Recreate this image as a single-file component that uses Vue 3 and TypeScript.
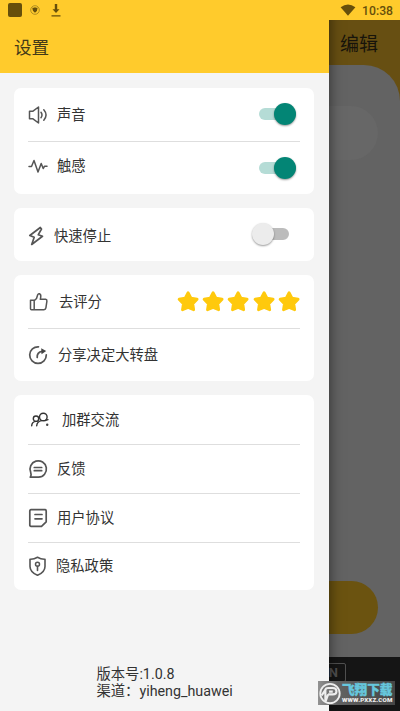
<script setup lang="ts">
import { ref } from 'vue'

const sound = ref(true)
const haptic = ref(true)
const quickStop = ref(false)
const stars = 5
</script>

<template>
  <div class="screen">
    <main class="page">
      <header class="page-head">编辑</header>
      <section class="sheet">
        <div class="result"></div>
        <div class="start"></div>
      </section>
      <footer class="ad"><span class="ad-box">N</span></footer>
    </main>

    <aside class="drawer">
      <header class="title">设置</header>
      <div class="content">
        <section class="card">
          <div class="row r-sound">
            <svg class="icon" viewBox="0 0 20 20"><path d="M1.500 6.200H5L10.500 2v16L5 13.800H1.500z" /><path d="M13 7.300q2 2.700 0 5.400M15.800 4.800q4.500 5.200 0 10.400" /></svg>
            <span class="label">声音</span>
            <button class="switch" :class="{ on: sound }" @click="sound = !sound"><i></i></button>
          </div>
          <div class="row r-haptic">
            <svg class="icon" viewBox="0 0 20 20"><path d="M1 10.500h2.500L6 4.500l4 11.500 3.200-8.500 2 5 1.400-2.300H19" /></svg>
            <span class="label">触感</span>
            <button class="switch" :class="{ on: haptic }" @click="haptic = !haptic"><i></i></button>
          </div>
        </section>

        <section class="card">
          <div class="row r-stop">
            <svg class="icon" viewBox="0 0 20 20"><path d="M12.300 1.500 1.800 9.500l4.400 1.800L3.700 18.500 14.500 10.300l-4.200-1.600L13.500 3z" stroke-width="1.700" /></svg>
            <span class="label">快速停止</span>
            <button class="switch" :class="{ on: quickStop }" @click="quickStop = !quickStop"><i></i></button>
          </div>
        </section>

        <section class="card">
          <div class="row r-rate">
            <svg class="icon" viewBox="0 0 20 20"><path d="M1.500 8.200h3.700v9.500H2.500q-1 0-1-1zM5.200 8.700 7.500 6.500l1.200-3.800Q9.300 1.300 10.500 1.800q1.700.8 1.200 3.500l-.4 2h5.300q1.500.2 1.300 1.800l-1 6.800q-.3 1.800-1.900 1.800H5.200" /></svg>
            <span class="label">去评分</span>
            <div class="stars">
              <svg v-for="n in stars" :key="n" viewBox="0 0 22 22"><path d="m11 2.200 2.900 5.500 6.100 1-4.300 4.600.9 6L11 16.900l-5.600 2.400.9-6L2 8.700l6.100-1z" /></svg>
            </div>
          </div>
          <div class="row r-share">
            <svg class="icon" viewBox="0 0 20 20"><path d="M10.500 1.800A8.300 8.300 0 1 0 18.300 9.800M9.200 12.500q-.4-5.400 5-6.200" stroke-width="1.700" /><path class="fill" d="m13.200 3.200 5 2.800-4.700 3.300z" /></svg>
            <span class="label">分享决定大转盘</span>
          </div>
        </section>

        <section class="card">
          <div class="row r-group">
            <svg class="icon dark" viewBox="0 0 20 20"><circle cx="6" cy="8.700" r="2.700" /><circle cx="13.300" cy="7" r="3.800" /><path d="M1.700 15.800q.2-4.100 4.300-4.400M6.700 15.800q.4-4.400 4.800-5.200M15 10.600l3-1" /><circle class="fill" cx="17.200" cy="14.800" r="1.200" /></svg>
            <span class="label">加群交流</span>
          </div>
          <div class="row r-feedback">
            <svg class="icon" viewBox="0 0 20 20"><path d="M2.300 18.200H10.500a8.200 8.200 0 1 0-7.800-4.900q1 2.400-.4 4.900zM6.300 8.500h7.400M6.300 11.700h7.400" stroke-width="1.700" /></svg>
            <span class="label">反馈</span>
          </div>
          <div class="row r-terms">
            <svg class="icon" viewBox="0 0 20 20"><path d="M3 1.700h14q1.200 0 1.200 1.300v10.800L13.500 18.300H3Q1.800 18.300 1.800 17V3Q1.800 1.700 3 1.700zM7 6.500h7M7 10.800h7" stroke-width="1.700" /></svg>
            <span class="label">用户协议</span>
          </div>
          <div class="row r-privacy">
            <svg class="icon" viewBox="0 0 20 20"><path d="M9.500 1.200q3.500 2.200 7.500 2v7.200q0 5.500-7.500 8.900Q2 15.900 2 10.400V3.200q4 .2 7.500-2zM9.500 10.200v4.300" stroke-width="1.600" /><circle cx="9.500" cy="8.200" r="2" /></svg>
            <span class="label">隐私政策</span>
          </div>
        </section>
      </div>
      <footer class="version">
        <div>版本号:1.0.8</div>
        <div>渠道：yiheng_huawei</div>
      </footer>
    </aside>

    <div class="status">
      <span class="app-square"></span>
      <svg class="shield" viewBox="0 0 10 10"><circle cx="5" cy="5" r="4.300" /><path d="M5 2.200q1.400.8 2.600.6Q7.700 6.200 5 7.700 2.300 6.200 2.400 2.800 3.600 3 5 2.200z" /></svg>
      <svg class="download" viewBox="0 0 10 13"><path d="M3.800 0h2.400v5.200h2.300L5 9 1.500 5.200h2.300zM.5 11.200h9v1.200h-9z" /></svg>
      <svg class="wifi" viewBox="0 0 16 12"><path d="M.6 3.200Q8-2.200 15.400 3.200L8 11.700z" /></svg>
      <span class="clock">10:38</span>
    </div>

    <div class="watermark">
      <svg class="mark" viewBox="0 0 26 26"><circle cx="13" cy="13" r="10.500" /><path d="M8 22V9.500Q8 7 11 7h5q4 0 4 3.500T16 14h-5M4 15l4-6M12 11h4M8 22l3-8" /></svg>
      <div class="mark-text"><b>飞翔下载</b><small>WWW.PXXZ.COM</small></div>
    </div>
  </div>
</template>

<style>
body {
  background: #656565;
  overflow: hidden;
}
</style>

<style scoped>
.screen {
  position: relative;
  width: 400px;
  height: 711px;
  overflow: hidden;
  font-family: Roboto, "Noto Sans CJK SC", sans-serif;
  color: #333;
}
.page {
  display: flex;
  flex-direction: column;
  height: 711px;
  background: #674f12;
}
.page-head {
  height: 65px;
  box-sizing: border-box;
  padding: 31px 22px 0 0;
  text-align: right;
  font-size: 19px;
  line-height: 27px;
  color: #17140b;
}
.sheet {
  flex: 1;
  display: flex;
  flex-direction: column;
  justify-content: space-between;
  padding: 41px 22px 23px 0;
  border-radius: 0 36px 0 0;
  background: #636363;
}
.result {
  height: 54px;
  border-radius: 27px;
  background: #676767;
}
.start {
  height: 53px;
  border-radius: 27px;
  background: #6b5310;
}
.ad {
  height: 54px;
  box-sizing: border-box;
  padding: 6px 54px 0 0;
  display: flex;
  justify-content: flex-end;
  align-items: flex-start;
  background: #151515;
}
.ad-box {
  width: 90px;
  height: 19px;
  box-sizing: border-box;
  padding-right: 7px;
  border: 1.5px solid #505050;
  border-radius: 2px;
  text-align: right;
  font-size: 13px;
  font-weight: 700;
  line-height: 17px;
  color: #505050;
}
.drawer {
  position: absolute;
  top: 0;
  left: 0;
  width: 329px;
  height: 711px;
  display: flex;
  flex-direction: column;
  background: #f4f4f4;
  box-shadow: 0 0 13px rgba(0, 0, 0, .55);
}
.title {
  height: 73px;
  box-sizing: border-box;
  padding: 35px 0 0 14px;
  font-size: 17.6px;
  line-height: 27px;
  background: #ffcb2c;
  color: #443a18;
}
.content {
  display: flex;
  flex-direction: column;
  gap: 14.5px;
  padding: 15px 15px 0 14px;
}
.card {
  padding: 0 14px;
  border-radius: 7px;
  background: #fff;
}
.row {
  display: flex;
  align-items: center;
  height: 52.75px;
  box-sizing: border-box;
}
.row + .row {
  border-top: 1px solid #dedede;
}
.icon {
  flex: none;
  width: 20px;
  height: 20px;
  margin-left: -.5px;
  margin-right: -.5px;
  fill: none;
  stroke: #555;
  stroke-width: 1.5;
  stroke-linejoin: round;
  stroke-linecap: round;
}
.icon .fill {
  fill: #444;
  stroke: none;
}
.dark {
  stroke: #333;
  stroke-width: 1.4;
}
.label {
  margin-left: 10px;
  font-size: 14.3px;
  line-height: 20px;
  white-space: nowrap;
}
.r-sound { padding-top: 2px; }
.r-haptic { padding-bottom: 3px; }
.r-haptic .switch { transform: translateY(2px); }
.r-stop { padding-top: 4px; }
.r-stop .label { margin-left: 7px; }
.r-stop .switch { transform: translateY(-2px); margin-right: 11px; }
.r-rate .icon { margin-left: .5px; }
.r-rate .label { margin-left: 11px; }
.r-share .label { margin-left: 11px; }
.r-group .icon { margin-left: 1.5px; }
.r-group .label { margin-left: 13px; }
.r-privacy .label { margin-left: 9px; }
.r-group,
.r-feedback,
.r-terms,
.r-privacy {
  height: 48.75px;
}
.switch {
  display: flex;
  align-items: center;
  width: 37px;
  height: 12px;
  margin: 0 4px 0 auto;
  padding: 0;
  border: 0;
  border-radius: 6px;
  background: linear-gradient(90deg, transparent 8px, #bcbcbc 8px);
}
.r-sound .switch { transform: translateY(-1px); }
.switch i {
  width: 22px;
  height: 22px;
  flex: none;
  border-radius: 50%;
  background: #ececec;
  box-shadow: 0 1px 2px rgba(0, 0, 0, .4);
}
.switch.on {
  justify-content: flex-end;
  background: #b5dcd6;
}
.switch.on i {
  background: #038575;
}
.stars {
  display: flex;
  gap: 3px;
  margin: 0 0 0 auto;
  transform: translateY(-.5px);
}
.stars svg {
  width: 22.2px;
  height: 22px;
  fill: #ffc90d;
  stroke: #ffc90d;
  stroke-width: 2.8;
  stroke-linejoin: round;
}
.version {
  margin: auto 0 12px 96.5px;
  font-size: 14.3px;
  line-height: 16.5px;
}
.status {
  position: absolute;
  top: 0;
  left: 0;
  width: 400px;
  height: 20px;
  box-sizing: border-box;
  padding: 0 7px 0 8px;
  display: flex;
  align-items: center;
  background: #ffcb2c;
  color: #664f0b;
}
.status svg {
  fill: #664f0b;
}
.app-square {
  width: 14px;
  height: 14px;
  border-radius: 2px;
  background: #664f0b;
}
.shield {
  width: 10px;
  height: 10px;
  margin-left: 8px;
}
.shield circle {
  fill: none;
  stroke: #8f7420;
  stroke-width: .7;
}
.download {
  width: 10px;
  height: 13px;
  margin-left: 11px;
}
.wifi {
  width: 16px;
  height: 12px;
  margin-left: auto;
}
.clock {
  margin-left: 6px;
  padding-top: 1px;
  font-size: 12.2px;
  font-weight: 500;
}
.watermark {
  position: absolute;
  left: 318px;
  top: 681px;
  width: 77px;
  height: 24px;
  display: flex;
  align-items: center;
  background: linear-gradient(90deg, #929292, #636363 25%, #454545);
}
.mark {
  width: 24px;
  height: 25px;
  flex: none;
  fill: #777;
  stroke: #eee;
  stroke-width: 2;
}
.mark path {
  fill: none;
  stroke-width: 2.3;
}
.mark-text {
  display: flex;
  flex-direction: column;
}
.mark-text b {
  font-size: 12.6px;
  font-weight: 900;
  line-height: 15px;
  color: #66c7dd;
  -webkit-text-stroke: .4px #66c7dd;
  white-space: nowrap;
}
.mark-text small {
  font-size: 6.2px;
  font-weight: 900;
  line-height: 7px;
  letter-spacing: .15px;
  color: #eee;
}
</style>
